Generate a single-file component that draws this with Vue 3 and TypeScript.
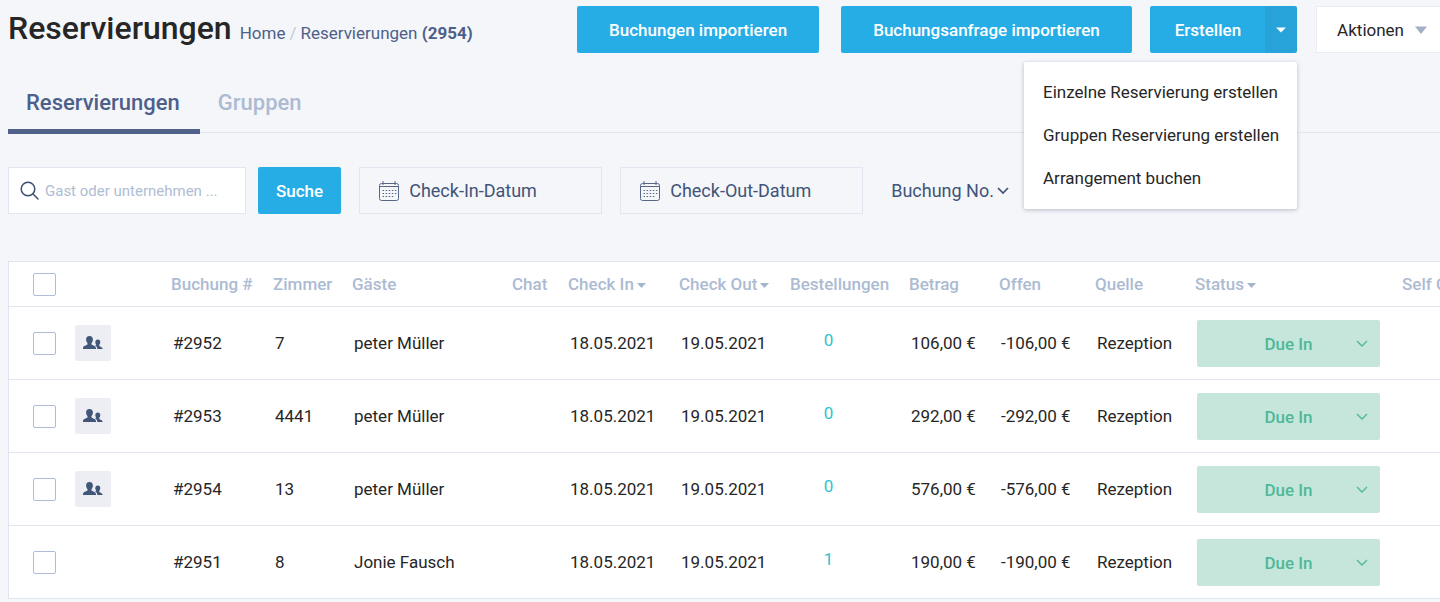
<script setup lang="ts">
import { ref } from 'vue'

interface Booking {
  id: number
  room: string
  guest: string
  group: boolean
  checkIn: string
  checkOut: string
  orders: number
  amount: string
  open: string
  source: string
}

interface Column {
  key: string
  label: string
  sortable?: boolean
}

const total = 2954
const search = ref('')
const checkIn = ref('')
const checkOut = ref('')

const menu: string[] = [
  'Einzelne Reservierung erstellen',
  'Gruppen Reservierung erstellen',
  'Arrangement buchen',
]

const columns: Column[] = [
  { key: 'number', label: 'Buchung #' },
  { key: 'room', label: 'Zimmer' },
  { key: 'guest', label: 'Gäste' },
  { key: 'chat', label: 'Chat' },
  { key: 'in', label: 'Check In', sortable: true },
  { key: 'out', label: 'Check Out', sortable: true },
  { key: 'orders', label: 'Bestellungen' },
  { key: 'amount', label: 'Betrag' },
  { key: 'open', label: 'Offen' },
  { key: 'source', label: 'Quelle' },
  { key: 'status', label: 'Status', sortable: true },
  { key: 'self', label: 'Self Check In' },
]

const base = { checkIn: '18.05.2021', checkOut: '19.05.2021', source: 'Rezeption' }

const bookings: Booking[] = [
  { ...base, id: 2952, room: '7', guest: 'peter Müller', group: true, orders: 0, amount: '106,00 €', open: '-106,00 €' },
  { ...base, id: 2953, room: '4441', guest: 'peter Müller', group: true, orders: 0, amount: '292,00 €', open: '-292,00 €' },
  { ...base, id: 2954, room: '13', guest: 'peter Müller', group: true, orders: 0, amount: '576,00 €', open: '-576,00 €' },
  { ...base, id: 2951, room: '8', guest: 'Jonie Fausch', group: false, orders: 1, amount: '190,00 €', open: '-190,00 €' },
]
</script>

<template>
  <main class="page">
    <header class="header">
      <div class="heading">
        <h1>Reservierungen</h1>
        <nav class="crumbs" aria-label="Pfad">
          <a href="#">Home</a><span class="slash">/</span><span>Reservierungen <b>({{ total }})</b></span>
        </nav>
      </div>
      <div class="actions">
        <button type="button" class="btn import">Buchungen importieren</button>
        <button type="button" class="btn">Buchungsanfrage importieren</button>
        <div class="split">
          <button type="button" class="btn main">Erstellen</button>
          <button type="button" class="btn toggle" aria-label="Menü" aria-expanded="true">
            <svg width="10" height="6" viewBox="0 0 10 6"><path d="M0 0.5h10L5 5.5z" fill="#fff" /></svg>
          </button>
          <ul class="menu">
            <li v-for="item in menu" :key="item"><a href="#">{{ item }}</a></li>
          </ul>
        </div>
        <button type="button" class="more">
          Aktionen
          <svg width="12" height="8" viewBox="0 0 12 8"><path d="M0 0.5h12L6 8z" fill="#a5afc4" /></svg>
        </button>
      </div>
    </header>

    <nav class="tabs">
      <a href="#" class="tab active">Reservierungen</a>
      <a href="#" class="tab">Gruppen</a>
    </nav>

    <form class="filters" @submit.prevent>
      <label class="field search">
        <svg width="20" height="20" viewBox="0 0 20 20" fill="none" stroke="#3c4f72" stroke-width="1.5">
          <circle cx="8" cy="8" r="6.8" /><path d="M12.8 12.8L18 18" stroke-linecap="round" />
        </svg>
        <input v-model="search" type="text" aria-label="Suche" placeholder="Gast oder unternehmen ..." />
      </label>
      <button type="submit" class="btn submit">Suche</button>
      <label class="field date">
        <svg width="20" height="20" viewBox="0 0 20 20" fill="none" stroke="#566786">
          <rect x="0.5" y="2.5" width="19" height="17" rx="2" /><path d="M0.5 5.5h19M4 0v4M16 0v4" />
          <path d="M3.500 9.500h14M3.500 12.500h14M3.500 15.500h11" stroke-dasharray="1.500 1.600" stroke-width="1.200" />
        </svg>
        <input v-model="checkIn" type="text" aria-label="Check-In" placeholder="Check-In-Datum" />
      </label>
      <label class="field date">
        <svg width="20" height="20" viewBox="0 0 20 20" fill="none" stroke="#566786">
          <rect x="0.5" y="2.5" width="19" height="17" rx="2" /><path d="M0.5 5.5h19M4 0v4M16 0v4" />
          <path d="M3.500 9.500h14M3.500 12.500h14M3.500 15.500h11" stroke-dasharray="1.500 1.600" stroke-width="1.200" />
        </svg>
        <input v-model="checkOut" type="text" aria-label="Check-Out" placeholder="Check-Out-Datum" />
      </label>
      <div class="order">
        <select aria-label="Sortierung"><option>Buchung No.</option></select>
        <svg width="12" height="8" viewBox="0 0 12 8" fill="none" stroke="#3f5478" stroke-width="1.7"><path d="M1 1l5 5 5-5" /></svg>
      </div>
    </form>

    <div class="panel">
      <table>
        <colgroup>
          <col class="c-check" /><col class="c-group" />
          <col v-for="column in columns" :key="column.key" :class="'c-' + column.key" />
        </colgroup>
        <thead>
          <tr>
            <th class="pick"><input type="checkbox" aria-label="Alle auswählen" /></th>
            <th></th>
            <th v-for="column in columns" :key="column.key" scope="col">
              {{ column.label }}<svg v-if="column.sortable" class="sort" width="9" height="5" viewBox="0 0 9 5"><path d="M0 0h9L4.500 5z" fill="#a3b4cf" /></svg>
            </th>
          </tr>
        </thead>
        <tbody>
          <tr v-for="b in bookings" :key="b.id">
            <td class="pick"><input type="checkbox" :aria-label="'Buchung ' + b.id" /></td>
            <td class="group">
              <button v-if="b.group" type="button" class="people" aria-label="Gruppe">
                <svg width="20" height="14" viewBox="0 0 20 14" fill="#415678">
                  <path d="M6.500 0C8.800 0 10 1.600 9.900 3.700 9.800 5.300 9.200 6.300 8.500 7v1.600c1 .9 4.200 1.200 4.500 3.400V13H0v-1c.3-2.200 3.500-2.500 4.500-3.400V7C3.800 6.300 3.200 5.300 3.100 3.700 3 1.600 4.200 0 6.500 0z" />
                  <path d="M14.800 3.500c1.700 0 2.600 1.200 2.500 2.800-.1 1.100-.5 1.900-1 2.400v1.200c.8.700 2.900.9 3.200 2.400v.7h-5.200c0-2.300-1.300-3-2.300-3.500.6-.2 1-.4 1.200-.8-.5-.5-.9-1.300-.9-2.400 0-1.600.8-2.800 2.500-2.800z" />
                </svg>
              </button>
            </td>
            <td>#{{ b.id }}</td>
            <td>{{ b.room }}</td>
            <td>{{ b.guest }}</td>
            <td></td>
            <td>{{ b.checkIn }}</td>
            <td>{{ b.checkOut }}</td>
            <td class="orders"><a href="#">{{ b.orders }}</a></td>
            <td>{{ b.amount }}</td>
            <td>{{ b.open }}</td>
            <td>{{ b.source }}</td>
            <td>
              <div class="status">
                <select :aria-label="'Status ' + b.id"><option>Due In</option></select>
                <svg width="12" height="8" viewBox="0 0 12 8" fill="none" stroke="#4fb898" stroke-width="1.400"><path d="M1 1l5 5 5-5" /></svg>
              </div>
            </td>
            <td></td>
          </tr>
        </tbody>
      </table>
    </div>
  </main>
</template>

<style>
body {
  margin: 0;
  background: #f5f6fa;
}
</style>

<style scoped>
.page {
  box-sizing: border-box;
  padding: 6px 0 2px 8px;
  overflow: hidden;
  background: #f5f6fa;
  color: #262626;
  font: 17px/24px Roboto, "Liberation Sans", sans-serif;
}
button,
input,
select {
  margin: 0;
  font: inherit;
  color: inherit;
}
button {
  cursor: pointer;
}
a {
  color: inherit;
  text-decoration: none;
}
.header {
  display: flex;
  justify-content: space-between;
  align-items: flex-start;
  margin-right: -8px;
}
.heading {
  display: flex;
  align-items: baseline;
  gap: 8px;
  white-space: nowrap;
}
h1 {
  margin: 0;
  font-size: 32px;
  line-height: 44px;
  font-weight: 500;
}
.crumbs {
  color: #4d608a;
}
.crumbs b {
  font-weight: 700;
}
.slash {
  margin: 0 4px;
  color: #c3cad8;
}
.actions {
  display: flex;
  flex: none;
}
.btn {
  box-sizing: border-box;
  height: 47px;
  padding: 0 32px;
  border: 0;
  border-radius: 2px;
  background: #27ade5;
  color: #fff;
  font-weight: 500;
  white-space: nowrap;
}
.import {
  margin-right: 22px;
}
.split {
  position: relative;
  display: flex;
  margin: 0 19px 0 18px;
}
.btn.main {
  padding: 0 24px 0 25px;
  border-radius: 2px 0 0 2px;
}
.btn.toggle {
  display: flex;
  align-items: center;
  justify-content: center;
  width: 32px;
  padding: 0;
  border-radius: 0 2px 2px 0;
  background: #27a3d9;
}
.menu {
  position: absolute;
  z-index: 2;
  top: 56px;
  right: 0;
  box-sizing: border-box;
  margin: 0;
  padding: 9px 0;
  border-radius: 2px;
  background: #fff;
  box-shadow: 0 1px 4px rgba(40, 50, 80, 0.3);
  list-style: none;
}
.menu a {
  display: block;
  padding: 9px 18px 10px 19px;
  white-space: nowrap;
}
.more {
  display: flex;
  align-items: center;
  gap: 11px;
  height: 47px;
  padding: 0 20px;
  border: 1px solid #e9ecf3;
  background: #fff;
}
.tabs {
  display: flex;
  margin-top: 32px;
  border-bottom: 1px solid #e1e7ef;
}
.tab {
  padding: 4px 20px 12px 18px;
  border-bottom: 5px solid transparent;
  margin-bottom: -2px;
  color: #acbbd2;
  font-size: 22px;
  line-height: 28px;
  font-weight: 500;
}
.tab.active {
  border-color: #50628a;
  color: #4d608a;
}
.filters {
  display: flex;
  margin-top: 34px;
}
.field {
  display: flex;
  align-items: center;
  box-sizing: border-box;
  width: 243px;
  height: 47px;
  padding: 0 19px;
  border: 1px solid #e1e6f1;
  color: #3f5478;
}
.field svg {
  flex: none;
}
.field input {
  flex: 1;
  min-width: 0;
  padding: 0;
  border: 0;
  outline: 0;
  background: none;
}
.field.search {
  width: 238px;
  padding: 0 11px;
  gap: 5px;
  background: #fff;
}
.search input {
  font-size: 15px;
}
.search input::placeholder {
  color: #afbdd4;
  opacity: 1;
}
.date {
  gap: 10px;
  margin-left: 18px;
}
.date input {
  font-size: 18px;
}
.date input::placeholder {
  color: #3f5478;
  opacity: 1;
}
.submit {
  padding: 0 18px;
  margin-left: 12px;
}
.order {
  display: flex;
  align-items: center;
  gap: 3px;
  margin-left: 28px;
  color: #3f5478;
  font-size: 18px;
}
.order select {
  appearance: none;
  padding: 0;
  border: 0;
  background: none;
}
.panel {
  margin-top: 47px;
  overflow: hidden;
  border: 1px solid #dfe6f0;
  border-right: 0;
  background: #fff;
}
table {
  width: 1503px;
  border-collapse: collapse;
  table-layout: fixed;
}
.c-check { width: 57px; }
.c-group { width: 95px; }
.c-number { width: 102px; }
.c-room { width: 79px; }
.c-guest { width: 160px; }
.c-chat { width: 56px; }
.c-in, .c-out { width: 111px; }
.c-orders { width: 119px; }
.c-amount { width: 90px; }
.c-open { width: 96px; }
.c-source { width: 100px; }
.c-status { width: 207px; }
.c-self { width: 120px; }
th {
  height: 44px;
  padding: 0 0 0 10px;
  color: #acbbd2;
  font-weight: 500;
  text-align: left;
  white-space: nowrap;
}
.sort {
  margin-left: 3px;
  vertical-align: 2px;
}
td {
  height: 72px;
  padding: 0 0 0 12px;
  border-top: 1px solid #dfe6f0;
  white-space: nowrap;
}
.pick {
  padding: 0 0 0 24px;
}
.pick input {
  display: block;
  appearance: none;
  box-sizing: border-box;
  width: 23px;
  height: 23px;
  border: 1px solid #aebdd8;
  border-radius: 2px;
  background: #fff;
}
.group {
  padding-left: 9px;
}
.people {
  display: flex;
  align-items: center;
  justify-content: center;
  width: 36px;
  height: 36px;
  padding: 0;
  border: 0;
  border-radius: 2px;
  background: #eceef3;
}
.orders {
  padding: 0 22px 0 0;
  color: #2ec4cf;
  text-align: center;
}
.orders a {
  display: block;
  padding-bottom: 6px;
}
.status {
  position: relative;
  width: 183px;
}
.status select {
  display: block;
  appearance: none;
  width: 100%;
  height: 47px;
  padding: 1px 0 0;
  border: 0;
  border-radius: 2px;
  background: #c6e6dc;
  color: #4fb898;
  font-weight: 500;
  text-align: center;
  text-align-last: center;
}
.status svg {
  position: absolute;
  top: 20px;
  right: 12px;
  pointer-events: none;
}
</style>
